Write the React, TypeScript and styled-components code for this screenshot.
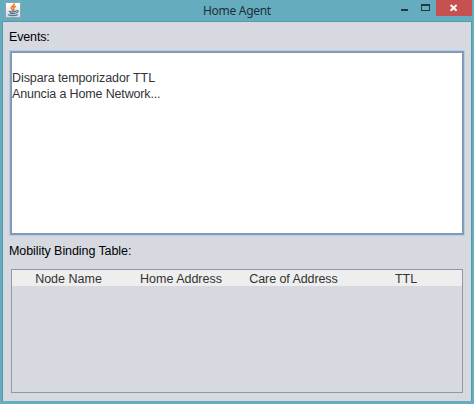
import React from "react";
import styled, { createGlobalStyle } from "styled-components";

const GlobalStyle = createGlobalStyle`
  * { box-sizing: border-box; }
  body { margin: 0; background: #66acbf; }
`;

const Window = styled.div`
  width: 474px;
  height: 404px;
  display: flex;
  flex-direction: column;
  padding: 0 2px 3px;
  background: #66acbf;
  font: 12.5px/16px "Liberation Sans", Arial, sans-serif;
  color: #333;
  overflow: hidden;
`;

const TitleBar = styled.header`
  height: 21px;
  flex: none;
  display: grid;
  grid-template-columns: 60px 1fr 78px;
  align-items: start;
`;

const AppIcon = styled.svg`
  display: block;
  margin: 2px 0 0 3px;
`;

const Title = styled.h1`
  margin: 2px 0 0 10px;
  padding-left: 131px;
  font: 12px/17px "Noto Sans", "Open Sans", sans-serif;
  letter-spacing: -0.3px;
  color: #1d3036;
  white-space: nowrap;
`;

const Controls = styled.div`
  display: flex;
  height: 16px;
`;

const ControlButton = styled.button<{ $width: number; $close?: boolean }>`
  width: ${(p) => p.$width}px;
  height: 16px;
  flex: none;
  padding: 0;
  border: 0;
  background: ${(p) => (p.$close ? "#c75050" : "transparent")};
  svg { display: block; }
`;

const Client = styled.main`
  flex: 1;
  display: flex;
  flex-direction: column;
  border: 1px solid #5799aa;
  border-bottom: 0;
  background: #d6d9e0;
  padding: 7px 6px 8px;
`;

const Label = styled.div<{ $spacing?: number }>`
  height: 16px;
  flex: none;
  color: #000;
  letter-spacing: ${(p) => p.$spacing ?? 0}px;
  white-space: nowrap;
`;

const EventLog = styled.div`
  height: 182px;
  flex: none;
  margin: 7px 2px 0 2px;
  padding: 17px 0 0;
  border: 1px solid #8f939f;
  box-shadow: 0 0 0 1px #73a4d1, 0 0 0 2px #bacbe0;
  background: #fff;
`;

const LogLine = styled.div<{ $spacing: number }>`
  height: 16px;
  letter-spacing: ${(p) => p.$spacing}px;
  white-space: nowrap;
`;

const TableSection = styled.section`
  margin-top: 9px;
`;

const BindingTable = styled.div`
  height: 124px;
  margin: 10px 2px 0 2px;
  border: 1px solid #9297a1;
`;

const HeaderRow = styled.div`
  height: 16px;
  display: grid;
  grid-template-columns: 113px 112px 113px 112px;
  background: #eee;
  line-height: 18px;
  text-align: center;
  white-space: nowrap;
`;

const HeaderCell = styled.div<{ $spacing: number }>`
  letter-spacing: ${(p) => p.$spacing}px;
`;

const columns = [
  { name: "Node Name", spacing: 0 },
  { name: "Home Address", spacing: 0 },
  { name: "Care of Address", spacing: -0.08 },
  { name: "TTL", spacing: 0 },
];

function JavaIcon() {
  return (
    <AppIcon width="16" height="16" viewBox="0 0 16 16">
      <defs>
        <linearGradient id="tile" x1="0" y1="0" x2="0" y2="1">
          <stop offset="0" stopColor="#fff" />
          <stop offset="1" stopColor="#d5d8dc" />
        </linearGradient>
      </defs>
      <rect x="0.5" y="0.5" width="15" height="15" rx="1" fill="url(#tile)" stroke="#91a4a9" />
      <g fill="none" strokeLinecap="round">
        <path d="M9.2 2.2C9.2 4.1 6 4.5 6.4 6.3C6.6 7 7.4 7.3 7.5 8.4" stroke="#e8792b" strokeWidth="1.7" />
        <path d="M10.4 4.5C8.1 5.4 8.3 6.2 9 7.1L8.6 8.4" stroke="#e8792b" strokeWidth="1.4" />
        <path d="M4.3 9.3C6 9.9 9 9.9 10.7 9.2M5.3 11.1C6.7 11.6 9 11.6 10.2 11.1M3.5 12.9C5.4 13.8 10.4 13.8 12.3 12.9" stroke="#527a98" strokeWidth="1.3" />
        <path d="M11.4 8.7C13.7 7.9 14 10 11.5 10.9" stroke="#527a98" strokeWidth="1.2" />
      </g>
    </AppIcon>
  );
}

export default function App() {
  return (
    <>
      <GlobalStyle />
      <Window>
        <TitleBar>
          <JavaIcon />
          <Title>Home Agent</Title>
          <Controls>
            <ControlButton $width={20} aria-label="Minimize">
              <svg width="20" height="16"><path d="M7 9h7v2H7z" fill="#25383e" /></svg>
            </ControlButton>
            <ControlButton $width={22} aria-label="Maximize">
              <svg width="22" height="16"><path d="M7 4h9v7H7zM8 6v4h7V6z" fillRule="evenodd" fill="#25383e" /></svg>
            </ControlButton>
            <ControlButton $width={36} $close aria-label="Close">
              <svg width="36" height="16"><path d="M14.6 5L20.6 10.8M20.6 5L14.6 10.8" stroke="#fff" strokeWidth="1.9" /></svg>
            </ControlButton>
          </Controls>
        </TitleBar>
        <Client>
          <Label $spacing={-0.15}>Events:</Label>
          <EventLog>
            <LogLine $spacing={-0.08}>Dispara temporizador TTL</LogLine>
            <LogLine $spacing={-0.15}>Anuncia a Home Network...</LogLine>
          </EventLog>
          <TableSection>
            <Label $spacing={-0.08}>Mobility Binding Table:</Label>
            <BindingTable>
              <HeaderRow>
                {columns.map((c) => (
                  <HeaderCell key={c.name} $spacing={c.spacing}>{c.name}</HeaderCell>
                ))}
              </HeaderRow>
            </BindingTable>
          </TableSection>
        </Client>
      </Window>
    </>
  );
}
